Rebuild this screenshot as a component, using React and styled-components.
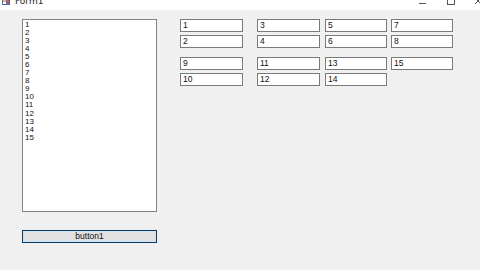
import styled, { createGlobalStyle } from 'styled-components';

const GlobalStyle = createGlobalStyle`
  html, body {
    margin: 0;
    padding: 0;
    background: #f0f0f0;
    font-family: 'Liberation Sans', 'DejaVu Sans', sans-serif;
  }
`;

const groups = [
  [[1, 2], [9, 10]],
  [[3, 4], [11, 12]],
  [[5, 6], [13, 14]],
  [[7, 8], [15]],
];

const columnGaps = [0, 14, 5, 4];
const columnWidths = [63, 63, 62, 62];

export default function App(){
  const items = Array.from({ length: 15 }, (_, i) => i + 1);

  return (
    <>
      <GlobalStyle />
      <S.Window>
        <S.TitleBar>
          <S.TitleLeft>
            <S.AppIcon viewBox="0 0 8 8">
              <rect x="0" y="0" width="8" height="8" fill="#3a6fb0" />
              <rect x="1" y="2" width="3" height="2" fill="#f2c14e" />
              <rect x="4.5" y="2" width="2.5" height="5" fill="#d9534f" />
              <rect x="1" y="4.5" width="3" height="2.5" fill="#ffffff" />
            </S.AppIcon>
            <S.Title>Form1</S.Title>
          </S.TitleLeft>
          <S.Controls>
            <S.Minimize />
            <S.Maximize />
            <S.Close viewBox="0 0 6 6">
              <path d="M0 0 L6 6 M6 0 L0 6" stroke="#444" strokeWidth="0.9" />
            </S.Close>
          </S.Controls>
        </S.TitleBar>

        <S.Client>
          <S.LeftColumn>
            <S.ListBox>
              {items.map(n => <S.ListItem key={n}>{n}</S.ListItem>)}
            </S.ListBox>
            <S.Button>button1</S.Button>
          </S.LeftColumn>

          <S.Fields>
            {groups.map((col, ci) => (
              <S.Column key={ci} gap={columnGaps[ci]} width={columnWidths[ci]}>
                {col.map((pair, gi) => (
                  <S.Group key={gi}>
                    {pair.map(n => <S.TextBox key={n}>{n}</S.TextBox>)}
                  </S.Group>
                ))}
              </S.Column>
            ))}
          </S.Fields>
        </S.Client>
      </S.Window>
    </>
  );
}

const S = {};

S.Window = styled.div`
  width: 480px;
  height: 270px;
  background: #f0f0f0;
  display: flex;
  flex-direction: column;
  overflow: hidden;
`;

S.TitleBar = styled.div`
  height: 10px;
  background: #ffffff;
  display: flex;
  justify-content: space-between;
  align-items: flex-start;
  overflow: hidden;
`;

S.TitleLeft = styled.div`
  display: flex;
  align-items: flex-start;
  margin-top: -3px;
  padding-left: 2px;
`;

S.AppIcon = styled.svg`
  width: 8px;
  height: 8px;
  margin-right: 5px;
`;

S.Title = styled.div`
  font-size: 9px;
  line-height: 9px;
  color: #222;
  font-family: 'DejaVu Sans', sans-serif;
`;

S.Controls = styled.div`
  display: flex;
  align-items: flex-start;
  margin-top: -1px;
`;

S.Minimize = styled.div`
  width: 7px;
  height: 1px;
  background: #555;
  margin-top: 4px;
  margin-right: 21px;
`;

S.Maximize = styled.div`
  width: 6px;
  height: 5px;
  border: 1px solid #555;
  margin-top: -1px;
  margin-right: 20px;
`;

S.Close = styled.svg`
  width: 6px;
  height: 6px;
  margin-top: -1px;
  margin-right: -1px;
`;

S.Client = styled.div`
  display: flex;
  align-items: flex-start;
  padding: 9px 0 0 22px;
`;

S.LeftColumn = styled.div`
  display: flex;
  flex-direction: column;
  width: 135px;
`;

S.ListBox = styled.div`
  box-sizing: border-box;
  height: 193px;
  background: #ffffff;
  border: 1px solid #828282;
  padding: 1px 2px;
  display: flex;
  flex-direction: column;
`;

S.ListItem = styled.div`
  font-size: 8px;
  line-height: 8.05px;
  color: #111;
`;

S.Button = styled.div`
  box-sizing: border-box;
  margin-top: 18px;
  height: 13px;
  background: #e1e1e1;
  border: 1px solid #0b3a63;
  box-shadow: inset 0 0 0 1px #cce4f7;
  font-size: 8.5px;
  line-height: 11px;
  text-align: center;
  color: #111;
`;

S.Fields = styled.div`
  display: flex;
  margin-left: 23px;
  align-items: flex-start;
`;

S.Column = styled.div`
  display: flex;
  flex-direction: column;
  gap: 9px;
  width: ${p => p.width}px;
  margin-left: ${p => p.gap}px;
`;

S.Group = styled.div`
  display: flex;
  flex-direction: column;
  gap: 3px;
`;

S.TextBox = styled.div`
  box-sizing: border-box;
  height: 13px;
  background: #ffffff;
  border: 1px solid #7a7a7a;
  padding-left: 2px;
  font-size: 8.5px;
  line-height: 11px;
  color: #111;
`;
